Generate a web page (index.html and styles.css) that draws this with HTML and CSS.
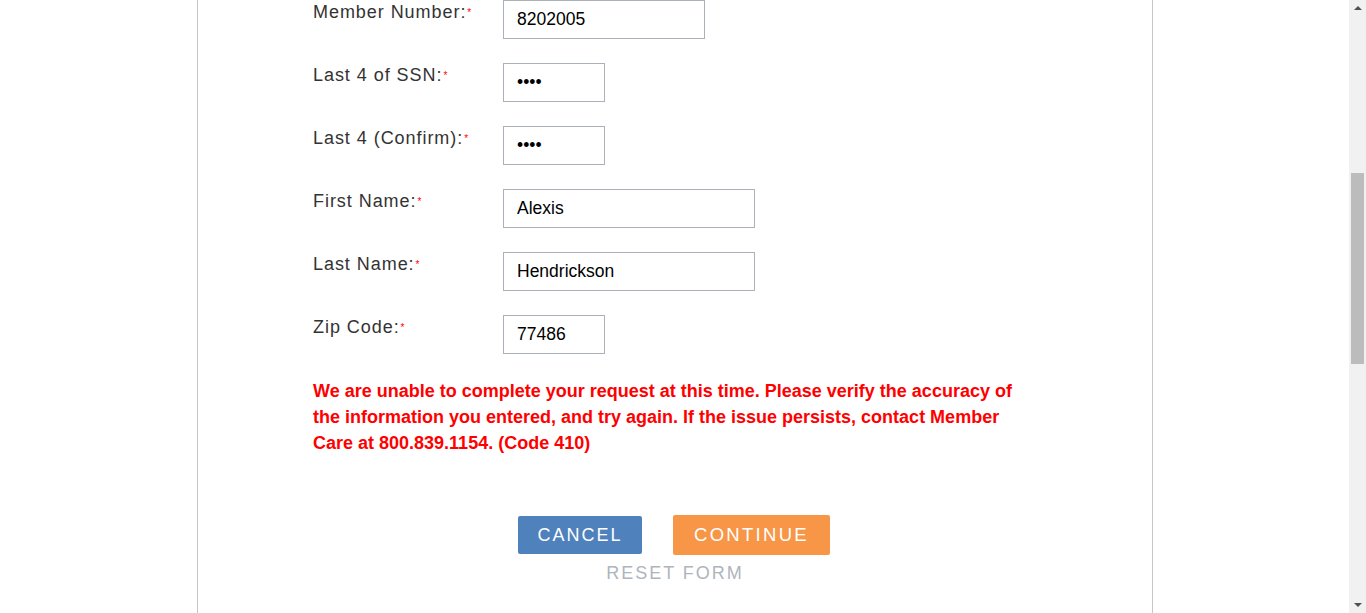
FILE: index.html
```html
<!DOCTYPE html>
<html lang="en">
<head>
<meta charset="utf-8">
<title>Member Verification</title>
<link rel="stylesheet" href="styles.css">
</head>
<body>
<div class="viewport">
  <main class="page">
    <section class="panel">
      <form class="form">
        <div class="rows">
          <label class="label">Member Number:<span class="req">*</span></label>
          <div class="field"><input class="input w-md" type="text" value="8202005"></div>

          <label class="label">Last 4 of SSN:<span class="req">*</span></label>
          <div class="field"><input class="input w-sm" type="password" value="1234"></div>

          <label class="label">Last 4 (Confirm):<span class="req">*</span></label>
          <div class="field"><input class="input w-sm" type="password" value="1234"></div>

          <label class="label">First Name:<span class="req">*</span></label>
          <div class="field"><input class="input w-lg" type="text" value="Alexis"></div>

          <label class="label">Last Name:<span class="req">*</span></label>
          <div class="field"><input class="input w-lg" type="text" value="Hendrickson"></div>

          <label class="label">Zip Code:<span class="req">*</span></label>
          <div class="field"><input class="input w-sm" type="text" value="77486"></div>
        </div>

        <p class="error">We are unable to complete your request at this time. Please verify the accuracy of the information you entered, and try again. If the issue persists, contact Member Care at 800.839.1154. (Code 410)</p>

        <div class="actions">
          <div class="buttons">
            <button type="button" class="btn btn-cancel">CANCEL</button>
            <button type="button" class="btn btn-continue">CONTINUE</button>
          </div>
          <a class="reset" href="#">RESET FORM</a>
        </div>
      </form>
    </section>
  </main>
  <div class="scrollbar">
    <div class="arrow arrow-up"></div>
    <div class="track"><div class="thumb"></div></div>
    <div class="arrow arrow-down"></div>
  </div>
</div>
</body>
</html>
```

FILE: styles.css
```css
html, body {
  margin: 0;
  padding: 0;
  height: 100%;
  overflow: hidden;
  background: #ffffff;
}

.viewport {
  display: flex;
  height: 613px;
  width: 1366px;
}

.page {
  flex: 1;
  height: 613px;
  overflow: hidden;
}

.panel {
  margin-left: 197px;
  width: 954px;
  height: 613px;
  border-left: 1px solid #c6c6c6;
  border-right: 1px solid #c6c6c6;
}

.form {
  padding-left: 115px;
  font-family: "Liberation Sans", Arial, sans-serif;
}

.rows {
  display: grid;
  grid-template-columns: 190px auto;
  grid-auto-rows: 39px;
  row-gap: 24px;
}

.label {
  font-size: 18px;
  line-height: 19px;
  letter-spacing: 0.95px;
  color: #333333;
  padding-top: 3px;
}

.req {
  color: #ff0000;
  font-size: 10px;
  letter-spacing: 0;
  vertical-align: 2px;
  margin-left: 1px;
}

.field {
  display: flex;
}

.input {
  box-sizing: border-box;
  height: 39px;
  border: 1px solid #aab1b8;
  border-radius: 0;
  padding: 0 8px 0 13px;
  font-family: "Liberation Sans", Arial, sans-serif;
  font-size: 17.5px;
  color: #000000;
  background: #ffffff;
  outline: none;
}

.w-md { width: 202px; }
.w-sm { width: 102px; }
.w-lg { width: 252px; }

.error {
  margin: 24px 0 0 0;
  width: 715px;
  font-size: 18px;
  line-height: 26px;
  font-weight: bold;
  color: #ff0000;
}

.actions {
  margin-top: 59px;
  margin-left: -117px;
  display: flex;
  flex-direction: column;
  align-items: center;
}

.buttons {
  display: flex;
  align-items: center;
  gap: 31px;
  height: 40px;
}

.btn {
  font-family: "Liberation Sans", Arial, sans-serif;
  font-size: 18px;
  letter-spacing: 2px;
  color: #ffffff;
  border: none;
  border-radius: 2px;
  padding: 0;
  cursor: pointer;
}

.btn-cancel {
  width: 124px;
  height: 38px;
  background: #4f81bd;
}

.btn-continue {
  width: 157px;
  height: 40px;
  background: #f79646;
  font-size: 18.5px;
  letter-spacing: 2.3px;
}

.reset {
  margin-top: 7px;
  margin-left: 2px;
  font-size: 18px;
  line-height: 22px;
  letter-spacing: 2px;
  color: #aeb5bc;
  text-decoration: none;
}

.scrollbar {
  width: 17px;
  height: 613px;
  background: #f1f1f1;
  display: flex;
  flex-direction: column;
  align-items: center;
}

.arrow {
  width: 0;
  height: 0;
  border-left: 4px solid transparent;
  border-right: 4px solid transparent;
}

.arrow-up {
  margin-top: 6px;
  border-bottom: 4px solid #505050;
}

.arrow-down {
  margin-bottom: 6px;
  border-top: 4px solid #505050;
}

.track {
  flex: 1;
  width: 100%;
  display: flex;
  justify-content: center;
}

.thumb {
  margin-top: 163px;
  width: 13px;
  height: 191px;
  background: #bcbcbc;
}
```
